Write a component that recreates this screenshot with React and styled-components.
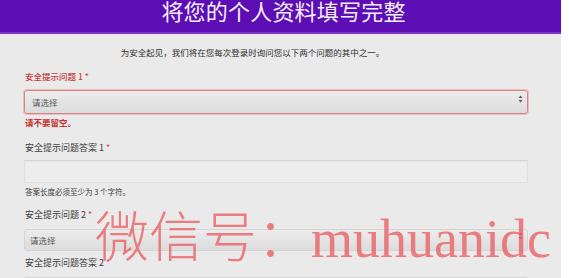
import React from "react";
import styled, { createGlobalStyle } from "styled-components";

const Global = createGlobalStyle`
  html, body { margin: 0; padding: 0; background: #ffffff; }
  body { font-family: "Noto Sans CJK SC", "Noto Sans", sans-serif; }
  * { box-sizing: border-box; }
`;

const Page = styled.div`
  position: relative;
  width: 561px;
  height: 278px;
  overflow: hidden;
  background: #ebeaea;
`;

const Header = styled.header`
  height: 34px;
  background: #5c0db4;
  border-bottom: 2px solid #7b35cf;
  display: flex;
  justify-content: center;
  align-items: flex-start;
  padding-left: 6px;
`;

const Title = styled.h1`
  margin: 0;
  font-size: 22px;
  line-height: 21px;
  font-weight: 400;
  color: #f4efff;
  letter-spacing: 0.2px;
`;

const Intro = styled.p`
  margin: 12px 0 0;
  padding-right: 56px;
  text-align: center;
  font-size: 8.5px;
  line-height: 12px;
  color: #2e2e2e;
`;

const Form = styled.form`
  padding: 0 33px 0 24px;
  display: flex;
  flex-direction: column;
`;

const Field = styled.div`
  display: flex;
  flex-direction: column;
  margin-top: ${(p) => p.$top}px;
  gap: ${(p) => p.$gap}px;
`;

const Label = styled.label`
  font-size: ${(p) => (p.$small ? 8.5 : 9)}px;
  line-height: 12px;
  padding-left: 1px;
  font-weight: ${(p) => (p.$error ? 500 : 400)};
  color: ${(p) => (p.$error ? "#c73b3b" : "#3a3a3a")};
`;

const Star = styled.span`
  color: #d84a4a;
  margin-left: 2px;
`;

const SelectWrap = styled.div`
  position: relative;
  height: ${(p) => p.$h}px;
`;

const Select = styled.select`
  appearance: none;
  -webkit-appearance: none;
  width: 100%;
  height: 100%;
  margin: 0;
  padding: 0 0 0 ${(p) => (p.$error ? 7 : 5)}px;
  font-family: inherit;
  font-size: 8.5px;
  color: #555;
  border-radius: 3px;
  border: 1px solid ${(p) => (p.$error ? "#d98383" : "#d4d4d4")};
  box-shadow: ${(p) => (p.$error ? "0 0 0 1px #edbcbc" : "none")};
  background: linear-gradient(#ececec, #dcdcdc);
  outline: none;
`;

const Arrows = styled.svg`
  position: absolute;
  right: 5px;
  top: 50%;
  width: 5px;
  height: 8px;
  margin-top: -4px;
  pointer-events: none;
`;

const TextInput = styled.input`
  width: 100%;
  height: 23px;
  margin: 0;
  border: 1px solid #e0e0e0;
  border-top-color: #d6d6d6;
  box-shadow: inset 0 1px 1px rgba(0, 0, 0, 0.04);
  background: #eeeded;
  border-radius: 1px;
  outline: none;
`;

const ErrorText = styled.div`
  font-size: 8.5px;
  line-height: 12px;
  font-weight: 700;
  color: #c63333;
  padding-left: 1px;
`;

const HelpText = styled.div`
  font-size: 7.5px;
  line-height: 12px;
  color: #3c3c3c;
  padding-left: 1px;
`;

const Watermark = styled.div`
  position: absolute;
  left: 95px;
  top: 212px;
  font-family: "Liberation Serif", "Noto Sans CJK SC", serif;
  font-size: 54px;
  line-height: 54px;
  font-weight: 300;
  color: rgba(234, 100, 104, 0.82);
  white-space: nowrap;
  pointer-events: none;
`;

function SelectBox({ error, h }) {
  return (
    <SelectWrap $h={h}>
      <Select $error={error} defaultValue="">
        <option value="">请选择</option>
      </Select>
      <Arrows viewBox="0 0 5 8">
        <path d="M2.5 0.5 L4.5 3 L0.5 3 Z" fill="#555" />
        <path d="M2.5 7.5 L4.5 5 L0.5 5 Z" fill="#555" />
      </Arrows>
    </SelectWrap>
  );
}

export default function App() {
  return (
    <>
      <Global />
      <Page>
        <Header>
          <Title>将您的个人资料填写完整</Title>
        </Header>
        <Intro>为安全起见，我们将在您每次登录时询问您以下两个问题的其中之一。</Intro>
        <Form>
          <Field $top={12} $gap={5}>
            <Label $error $small>
              安全提示问题 1<Star>*</Star>
            </Label>
            <SelectBox error h={24} />
            <ErrorText>请不要留空。</ErrorText>
          </Field>
          <Field $top={14} $gap={6}>
            <Label>
              安全提示问题答案 1<Star>*</Star>
            </Label>
            <TextInput type="text" />
          </Field>
          <Field $top={3} $gap={0}>
            <HelpText>答案长度必须至少为 3 个字符。</HelpText>
          </Field>
          <Field $top={11} $gap={4}>
            <Label>
              安全提示问题 2<Star>*</Star>
            </Label>
            <SelectBox h={22} />
          </Field>
          <Field $top={10} $gap={8}>
            <Label>
              安全提示问题答案 2<Star>*</Star>
            </Label>
            <TextInput type="text" />
          </Field>
        </Form>
        <Watermark>微信号：muhuanidc</Watermark>
      </Page>
    </>
  );
}
